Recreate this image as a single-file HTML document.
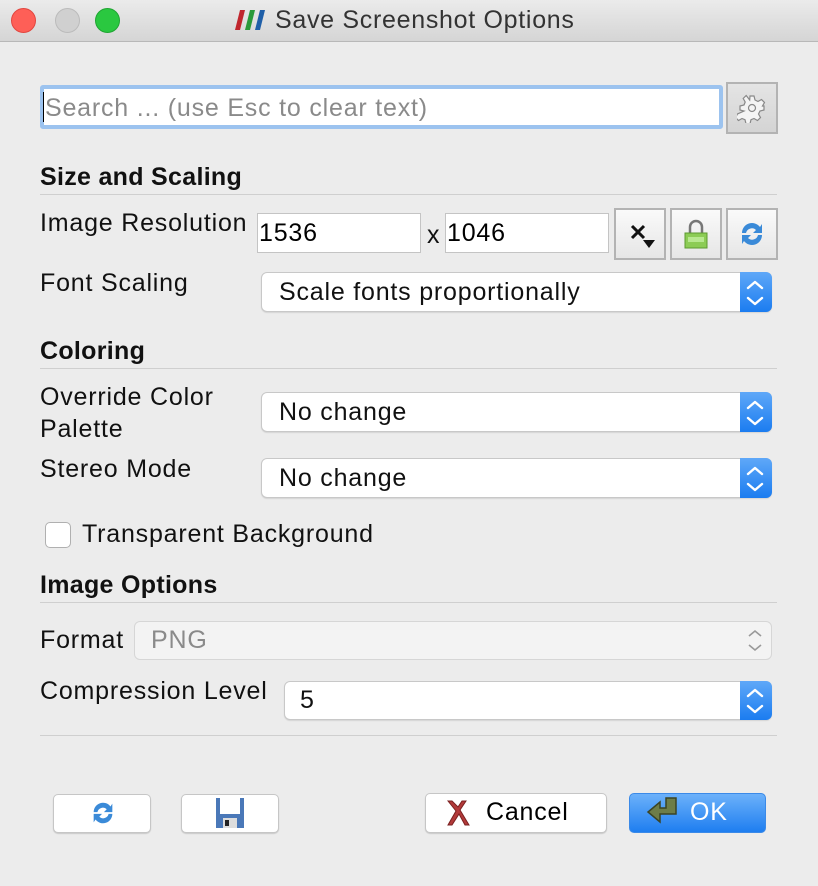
<!DOCTYPE html>
<html><head><meta charset="utf-8"><style>
*{box-sizing:border-box;margin:0;padding:0}
body{width:818px;height:886px;background:#ececec;font-family:"Liberation Sans",sans-serif;font-size:25px;letter-spacing:0.8px;color:#111;position:relative;overflow:hidden}
.a{position:absolute}
.t{position:absolute;white-space:nowrap;line-height:1}
.b{font-weight:bold;letter-spacing:0.3px}
.line{position:absolute;left:40px;width:737px;height:1px;background:#cfcfcf}
.in{position:absolute;background:#fff;border:1px solid #c4c4c4}
.combo{position:absolute;background:#fff;border:1px solid #c8c8c8;border-radius:6px;box-shadow:0 1px 1px rgba(0,0,0,.1)}
.combo .ar{position:absolute;right:-1px;top:-1px;bottom:-1px;width:32px;background:linear-gradient(#5fa8f8,#1b7cf0);border-radius:0 6px 6px 0}
.tb{position:absolute;border:2px solid #b3b3b3;background:linear-gradient(#fafafa,#e6e6e6)}
.btn{position:absolute;background:#fff;border:1px solid #c6c6c6;border-radius:5px;box-shadow:0 1px 1px rgba(0,0,0,.15)}
</style></head><body>
<div class="a" style="left:0;top:0;width:818px;height:42px;background:linear-gradient(#ebebeb,#d5d5d5);border-bottom:1px solid #b8b8b8"></div>
<div class="a" style="left:11px;top:8px;width:25px;height:25px;border-radius:50%;background:#fe5f57;border:1px solid #e2463f"></div>
<div class="a" style="left:55px;top:8px;width:25px;height:25px;border-radius:50%;background:#d0d0d0;border:1px solid #bbb"></div>
<div class="a" style="left:95px;top:8px;width:25px;height:25px;border-radius:50%;background:#2ac840;border:1px solid #1fa532"></div>
<svg class="a" style="left:235px;top:9px" width="30" height="22" viewBox="0 0 30 22"><path d="M5 1h5L5 21H0z" fill="#c0262d"/><path d="M15 1h5l-5 20h-5z" fill="#2a9a3b"/><path d="M25 1h5l-5 20h-5z" fill="#1f5fa8"/></svg>
<div class="t" style="left:275px;top:8px;font-size:25px;letter-spacing:0.7px;color:#333">Save Screenshot Options</div>

<div class="a" style="left:40px;top:85px;width:683px;height:44px;border:4px solid #9cc3ef;border-radius:3px;background:#fff"></div>
<div class="a" style="left:43px;top:92px;width:1px;height:30px;background:#000"></div>
<div class="t" style="left:45px;top:96px;color:#8a8a8a">Search ... (use Esc to clear text)</div>
<div class="tb" style="left:726px;top:82px;width:52px;height:52px;background:linear-gradient(#e4e4e4,#d4d4d4)"></div>
<svg class="a" style="left:737px;top:93px" width="30" height="30" viewBox="0 0 30 30"><g fill="#f4f4f4" stroke="#888" stroke-width="1.2"><path d="M13 3h4l1 4 3 1.5 3.5-2 3 3-2 3.5L27 13v4l-4 1-1.5 3 2 3.5-3 3-3.5-2-3 1.2-1 4h-4l-1-4-3-1.2-3.5 2-3-3 2-3.5L7 18l-4-1v-4l4-1 1.2-3-2-3.5 3-3L12.7 7z"/><circle cx="15" cy="15" r="3.5"/></g></svg>

<div class="t b" style="left:40px;top:165px">Size and Scaling</div>
<div class="line" style="top:194px"></div>
<div class="t" style="left:40px;top:211px">Image Resolution</div>
<div class="in" style="left:257px;top:213px;width:164px;height:40px"></div>
<div class="t" style="left:259px;top:221px;color:#000">1536</div>
<div class="t" style="left:427px;top:223px">x</div>
<div class="in" style="left:445px;top:213px;width:164px;height:40px"></div>
<div class="t" style="left:447px;top:221px;color:#000">1046</div>
<div class="tb" style="left:614px;top:208px;width:52px;height:52px"></div>
<svg class="a" style="left:630px;top:224px" width="30" height="26"><path d="M2 2l12 12M14 2L2 14" stroke="#111" stroke-width="3"/><path d="M13 16h12l-6 8z" fill="#111"/></svg>
<div class="tb" style="left:670px;top:208px;width:52px;height:52px"></div>
<svg class="a" style="left:682px;top:217px" width="28" height="34"><path d="M8 16V10a6 6 0 0 1 12 0v6" fill="none" stroke="#777" stroke-width="2.5"/><rect x="3" y="16" width="22" height="15" fill="#8ccc55" stroke="#5c9a30"/><rect x="6" y="20" width="16" height="5" fill="#b8e890"/></svg>
<div class="tb" style="left:726px;top:208px;width:52px;height:52px"></div>
<svg class="a" style="left:737px;top:219px" width="30" height="30" viewBox="0 0 30 30"><path d="M5 14a10 10 0 0 1 18-6l2-3v9h-9l3-3a6 6 0 0 0-10 3z" fill="#3a8ad8"/><path d="M25 16a10 10 0 0 1-18 6l-2 3v-9h9l-3 3a6 6 0 0 0 10-3z" fill="#3a8ad8"/></svg>

<div class="t" style="left:40px;top:271px">Font Scaling</div>
<div class="combo" style="left:261px;top:272px;width:511px;height:40px"><div class="ar"></div></div>
<div class="t" style="left:279px;top:280px">Scale fonts proportionally</div>

<div class="t b" style="left:40px;top:339px">Coloring</div>
<div class="line" style="top:368px"></div>
<div class="t" style="left:40px;top:385px">Override Color</div>
<div class="t" style="left:40px;top:417px">Palette</div>
<div class="combo" style="left:261px;top:392px;width:511px;height:40px"><div class="ar"></div></div>
<div class="t" style="left:279px;top:400px">No change</div>
<div class="t" style="left:40px;top:457px">Stereo Mode</div>
<div class="combo" style="left:261px;top:458px;width:511px;height:40px"><div class="ar"></div></div>
<div class="t" style="left:279px;top:466px">No change</div>

<div class="a" style="left:45px;top:522px;width:26px;height:26px;background:#fff;border:1px solid #b0b0b0;border-radius:5px"></div>
<div class="t" style="left:82px;top:522px">Transparent Background</div>

<div class="t b" style="left:40px;top:573px">Image Options</div>
<div class="line" style="top:602px"></div>
<div class="t" style="left:40px;top:628px">Format</div>
<div class="a" style="left:134px;top:621px;width:638px;height:39px;background:#f3f3f3;border:1px solid #d6d6d6;border-radius:6px"></div>
<div class="t" style="left:151px;top:628px;color:#8a8a8a">PNG</div>
<div class="t" style="left:40px;top:679px">Compression Level</div>
<div class="combo" style="left:284px;top:681px;width:488px;height:39px"><div class="ar"></div></div>
<div class="t" style="left:300px;top:688px">5</div>
<div class="line" style="top:735px"></div>

<svg class="a" style="left:0;top:0;pointer-events:none" width="818" height="886"><g fill="none" stroke="#fff" stroke-width="2.4" stroke-linecap="round" stroke-linejoin="round"><path d="M748 288l7-6 7 6M748 298l7 6 7-6"/><path d="M748 408l7-6 7 6M748 418l7 6 7-6"/><path d="M748 474l7-6 7 6M748 484l7 6 7-6"/><path d="M748 696l7-6 7 6M748 706l7 6 7-6"/></g><g fill="none" stroke="#999" stroke-width="1.6"><path d="M749 636l6-5 6 5M749 645l6 5 6-5"/></g></svg>

<div class="btn" style="left:53px;top:794px;width:98px;height:39px"></div>
<svg class="a" style="left:89px;top:798px" width="28" height="30" viewBox="0 0 30 30"><path d="M5 14a10 10 0 0 1 18-6l2-3v9h-9l3-3a6 6 0 0 0-10 3z" fill="#3a8ad8"/><path d="M25 16a10 10 0 0 1-18 6l-2 3v-9h9l-3 3a6 6 0 0 0 10-3z" fill="#3a8ad8"/></svg>
<div class="btn" style="left:181px;top:794px;width:98px;height:39px"></div>
<svg class="a" style="left:215px;top:797px" width="30" height="32"><rect x="1" y="1" width="28" height="30" fill="#4a78b8"/><rect x="5" y="1" width="20" height="16" fill="#fff"/><rect x="8" y="21" width="14" height="10" fill="#ddd"/><rect x="10" y="23" width="4" height="6" fill="#222"/></svg>
<div class="btn" style="left:425px;top:793px;width:182px;height:40px"></div>
<svg class="a" style="left:444px;top:798px" width="28" height="30"><path d="M4 3l8 10-8 14h4l7-11 6 11h4L16 12l6-9h-4l-4 6-6-6z" fill="#b23a3a" stroke="#7a2020"/></svg>
<div class="t" style="left:486px;top:800px;color:#000">Cancel</div>
<div class="a" style="left:629px;top:793px;width:137px;height:40px;border-radius:5px;background:linear-gradient(#6cb1fa,#1e7ef0);border:1px solid #3b8ae8"></div>
<svg class="a" style="left:646px;top:796px" width="36" height="32"><path d="M20 2h10v16H14v8L2 16 14 6v6h6z" fill="#6d7d48" stroke="#3b4424" stroke-width="1.5"/></svg>
<div class="t" style="left:690px;top:800px;color:#fff;font-size:25px">OK</div>
</body></html>
